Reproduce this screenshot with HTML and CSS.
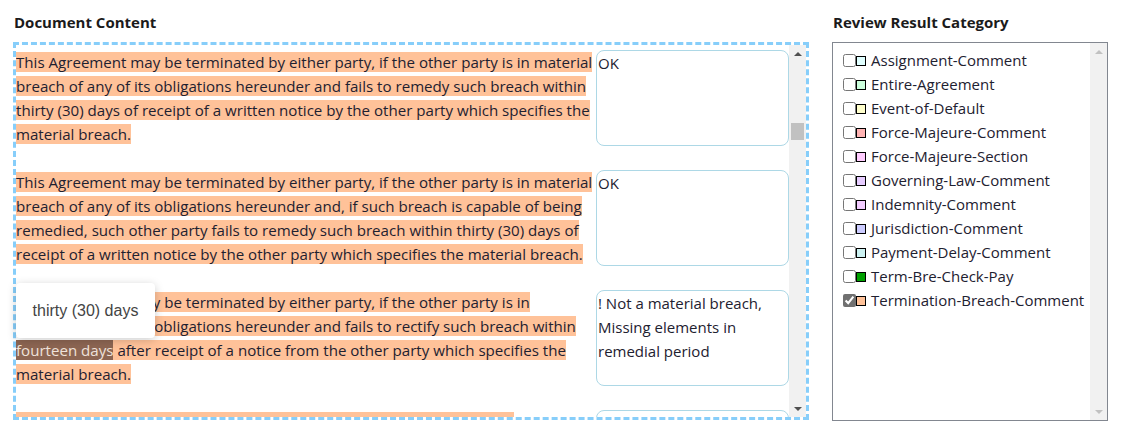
FILE: index.html
```html
<!DOCTYPE html>
<html lang="en">
<head>
    <meta charset="UTF-8">
    <meta name="viewport" content="width=device-width, initial-scale=1.0">
    <title>Contract Review</title>
    <link rel="stylesheet" href="styles.css">
</head>
<body>
    <div class="page">
        <!-- Document with review comments -->
        <section class="doc-panel">
            <h3 class="panel-title">Document Content</h3>
            <div class="doc-box">
                <div class="doc-scroll">
                    <div class="clause">
                        <p class="clause-text"><span class="hl">This Agreement may be terminated by either party, if the other party is in material<br>breach of any of its obligations hereunder and fails to remedy such breach within<br>thirty (30) days of receipt of a written notice by the other party which specifies the<br>material breach.</span></p>
                        <textarea class="review">OK</textarea>
                    </div>
                    <div class="clause">
                        <p class="clause-text"><span class="hl">This Agreement may be terminated by either party, if the other party is in material<br>breach of any of its obligations hereunder and, if such breach is capable of being<br>remedied, such other party fails to remedy such breach within thirty (30) days of<br>receipt of a written notice by the other party which specifies the material breach.</span></p>
                        <textarea class="review">OK</textarea>
                    </div>
                    <div class="clause">
                        <p class="clause-text"><span class="hl">This Agreement may be terminated by either party, if the other party is in<br>breach of any of its obligations hereunder and fails to rectify such breach within<br><span class="hl-active">fourteen days</span> after receipt of a notice from the other party which specifies the<br>material breach.</span></p>
                        <textarea class="review">! Not a material breach, Missing elements in remedial period</textarea>
                    </div>
                    <div class="clause">
                        <p class="clause-text"><span class="hl">Either party may terminate this Agreement if the other party shall be in<br>material breach of any of its obligations under this Agreement.</span></p>
                        <textarea class="review">!!! No cure period is defined for the breach</textarea>
                    </div>
                </div>
                <div class="scrollbar">
                    <span class="arrow arrow-up"></span>
                    <span class="track"><span class="thumb"></span></span>
                    <span class="arrow arrow-down"></span>
                </div>
                <div class="tooltip">thirty (30) days</div>
            </div>
        </section>

        <!-- Category legend -->
        <section class="cat-panel">
            <h3 class="panel-title">Review Result Category</h3>
            <div class="cat-box">
                <ul class="cat-list">
                    <li><input type="checkbox"><span class="swatch" style="background: #e0ffff;"></span>Assignment-Comment</li>
                    <li><input type="checkbox"><span class="swatch" style="background: #ccffdd;"></span>Entire-Agreement</li>
                    <li><input type="checkbox"><span class="swatch" style="background: #ffffcc;"></span>Event-of-Default</li>
                    <li><input type="checkbox"><span class="swatch" style="background: #ffb3b3;"></span>Force-Majeure-Comment</li>
                    <li><input type="checkbox"><span class="swatch" style="background: #ffccff;"></span>Force-Majeure-Section</li>
                    <li><input type="checkbox"><span class="swatch" style="background: #e6ccff;"></span>Governing-Law-Comment</li>
                    <li><input type="checkbox"><span class="swatch" style="background: #f2ccff;"></span>Indemnity-Comment</li>
                    <li><input type="checkbox"><span class="swatch" style="background: #ccccff;"></span>Jurisdiction-Comment</li>
                    <li><input type="checkbox"><span class="swatch" style="background: #ccf2f2;"></span>Payment-Delay-Comment</li>
                    <li><input type="checkbox"><span class="swatch" style="background: #00a000;"></span>Term-Bre-Check-Pay</li>
                    <li><input type="checkbox" checked><span class="swatch" style="background: #ffc299;"></span>Termination-Breach-Comment</li>
                </ul>
                <div class="scrollbar scrollbar-off">
                    <span class="arrow arrow-up"></span>
                    <span class="track"></span>
                    <span class="arrow arrow-down"></span>
                </div>
            </div>
        </section>
    </div>
</body>
</html>
```

FILE: styles.css
```css
body {
    margin: 0;
    font-family: "Open Sans", "Noto Sans", sans-serif;
    font-size: 15px;
    color: #1e2130;
    background: #fff;
}
.page {
    display: flex;
    gap: 23px;
    padding: 10px 13px;
}
.panel-title {
    margin: 0 0 8px 1px;
    font-size: 15px;
    font-weight: bold;
    line-height: 24px;
    color: #1b1b1b;
}

/* Document panel */
.doc-panel {
    flex: 0 0 796px;
}
.doc-box {
    position: relative;
    display: flex;
    height: 372px;
    border: 3px dashed #87cefa;
}
.doc-scroll {
    flex: 1;
    overflow: hidden;
    padding-top: 5px;
}
.clause {
    display: flex;
    margin-bottom: 24px;
}
.clause-text {
    flex: 0 0 580px;
    margin: 0;
    font-size: 15.1px;
    line-height: 24px;
    white-space: nowrap;
}
.hl {
    background-color: #ffc299;
}
.hl-active {
    background-color: #8c6552;
    color: #efe2da;
}
.review {
    flex: 0 0 193px;
    height: 96px;
    box-sizing: border-box;
    margin: 0;
    padding: 0 1px;
    border: 1px solid #add8e6;
    border-radius: 8px;
    font-family: inherit;
    font-size: 15px;
    line-height: 24px;
    color: #1e2130;
    resize: none;
    overflow: hidden;
}

/* Fake scrollbars */
.scrollbar {
    flex: 0 0 17px;
    display: flex;
    flex-direction: column;
    background: #f1f1f1;
}
.arrow {
    height: 17px;
    display: flex;
    justify-content: center;
    align-items: center;
}
.arrow::before {
    content: "";
    border-left: 4px solid transparent;
    border-right: 4px solid transparent;
}
.arrow-up::before {
    border-bottom: 4px solid #505050;
}
.arrow-down::before {
    border-top: 4px solid #505050;
}
.track {
    flex: 1;
}
.thumb {
    display: block;
    margin: 61px 2px 0;
    height: 17px;
    background: #c1c1c1;
}
.scrollbar-off .arrow-up::before {
    border-bottom-color: #c1c1c1;
}
.scrollbar-off .arrow-down::before {
    border-top-color: #c1c1c1;
}

.tooltip {
    position: absolute;
    left: 0;
    top: 238px;
    width: 139px;
    height: 55px;
    display: flex;
    justify-content: center;
    align-items: center;
    background: #fff;
    border-radius: 4px;
    box-shadow: 0 2px 10px rgba(0, 0, 0, 0.2);
    font-family: "Liberation Sans", Arial, sans-serif;
    font-size: 16px;
    color: #444;
}

/* Category panel */
.cat-panel {
    flex: 0 0 276px;
}
.cat-box {
    display: flex;
    height: 377px;
    border: 1px solid #828790;
}
.cat-list {
    flex: 1;
    list-style: none;
    margin: 0;
    padding: 5px 0 0 10px;
}
.cat-list li {
    display: flex;
    align-items: center;
    height: 24px;
}
.cat-list input {
    width: 13px;
    height: 13px;
    margin: 0;
    accent-color: #707070;
}
.swatch {
    width: 8px;
    height: 8px;
    margin: 2px 5px 0 0;
    border: 1px solid #000;
}
```
